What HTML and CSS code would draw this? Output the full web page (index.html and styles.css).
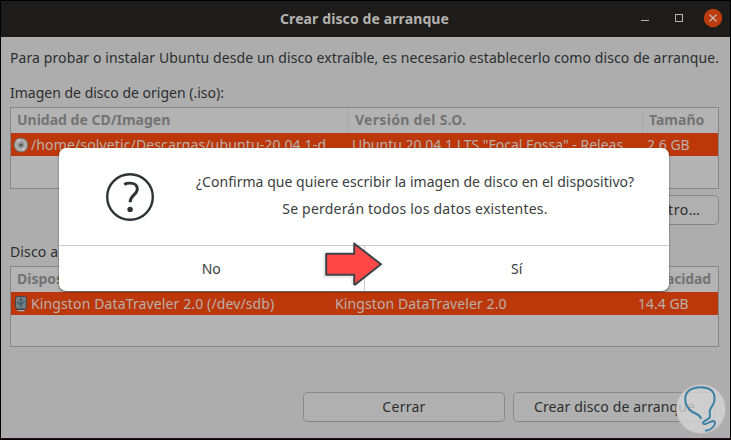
FILE: index.html
```html
<!DOCTYPE html>
<html lang="es">
<head>
<meta charset="utf-8">
<title>Crear disco de arranque</title>
<link rel="stylesheet" href="styles.css">
</head>
<body>
<main class="window">
  <header class="titlebar">
    <h1 class="title">Crear disco de arranque</h1>
    <svg class="controls" width="90" height="36" viewBox="0 0 90 36">
      <path d="M9 19.500h8" stroke="#b4b4b0" fill="none"/>
      <rect x="43.500" y="13.500" width="7" height="7" stroke="#b4b4b0" fill="none"/>
      <circle cx="81" cy="17" r="9.200" fill="#bc3c10"/>
      <path d="M77.500 13.500l7 7M84.500 13.500l-7 7" stroke="#c4b6ae" stroke-width="1.300" fill="none"/>
    </svg>
  </header>
  <section class="content">
    <p class="intro">Para probar o instalar Ubuntu desde un disco extraíble, es necesario establecerlo como disco de arranque.</p>
    <p class="label source-label">Imagen de disco de origen (.iso):</p>
    <div class="table source">
      <div class="row head">
        <span class="cell h-unit">Unidad de CD/Imagen</span>
        <span class="cell h-version">Versión del S.O.</span>
        <span class="cell h-size">Tamaño</span>
      </div>
      <div class="row selected">
        <span class="cell path"><svg class="icon" width="16" height="16" viewBox="0 0 16 16"><circle cx="8" cy="8" r="7" fill="#aaa" stroke="#6f655f"/><path d="M8 8L3 3.500A6.500 6.500 0 0 1 7 1.600zM8 8l5 4.500A6.500 6.500 0 0 1 9 14.400z" fill="#bcbcbc"/><circle cx="8" cy="8" r="2.500" fill="#929292" stroke="#727272" stroke-width=".7"/><circle cx="8" cy="8" r="1.100" fill="#333"/></svg>/home/solvetic/Descargas/ubuntu-20.04.1-d</span>
        <span class="cell version">Ubuntu 20.04.1 LTS "Focal Fossa" - Releas</span>
        <span class="cell size">2.6 GB</span>
      </div>
    </div>
    <div class="other-row"><button class="button other">Otro…</button></div>
    <p class="label target-label">Disco a usar:</p>
    <div class="table target">
      <div class="row head">
        <span class="cell h-device">Dispositivo</span>
        <span class="cell h-label">Etiqueta</span>
        <span class="cell h-capacity">Capacidad</span>
      </div>
      <div class="row selected">
        <span class="cell device"><svg class="icon" width="16" height="16" viewBox="0 0 16 16"><rect x="2.500" y=".500" width="11" height="12.500" rx="2" fill="#777e82" stroke="#414446"/><path d="M8 11V3M8 9L5 7V5M8 8l3-1.500V4.500M6.700 4L8 2.500 9.300 4" fill="none" stroke="#34556a" stroke-width="1.100"/><path d="M4.500 14.500h7" stroke="#9eb0b5" stroke-width="1.500"/><path d="M4 13.500h8" stroke="#3c4144"/></svg>Kingston DataTraveler 2.0 (/dev/sdb)</span>
        <span class="cell label-cell">Kingston DataTraveler 2.0</span>
        <span class="cell capacity">14.4 GB</span>
      </div>
    </div>
    <div class="actions">
      <button class="button close">Cerrar</button>
      <button class="button create">Crear disco de arranque</button>
    </div>
  </section>
</main>

<div class="dialog" role="dialog">
  <div class="message">
    <svg class="question" width="48" height="48" viewBox="0 0 48 48">
      <circle cx="24" cy="24" r="22.800" fill="none" stroke="#2e3234" stroke-width="2.400"/>
      <path d="M18.200 11.400C20 10.500 22 10.100 24 10.100C28.500 10.100 31.300 12.500 31.300 16C31.300 22 24.100 22 24.100 29.300" fill="none" stroke="#2e3234" stroke-width="2.900"/>
      <circle cx="24.100" cy="36.400" r="2.700" fill="#2e3234"/>
    </svg>
    <div class="text">
      <p class="ask">¿Confirma que quiere escribir la imagen de disco en el dispositivo?</p>
      <p class="warn">Se perderán todos los datos existentes.</p>
    </div>
  </div>
  <div class="choices">
    <button class="choice">No</button>
    <button class="choice">Sí</button>
  </div>
</div>

<svg class="arrow" width="64" height="48" viewBox="320 240 64 48">
  <path d="M325 254v22h28v8" fill="none" stroke="#e9ebe7" stroke-width="4"/>
  <path d="M326.200 253.800H354.200V243.600L381 264.200L355 284.600H354.200V274.800H326.200Z" fill="#ff4747" stroke="#3f4348" stroke-width="2" stroke-linejoin="round"/>
</svg>
<svg class="logo" width="52" height="52" viewBox="675 382.500 52 52">
  <circle cx="701" cy="408.500" r="24.700" fill="#d6d6d6" fill-opacity=".78" stroke="#b9b0b7" stroke-width=".8"/>
  <path d="M701 418.500C700 412.500 694 414 690 409.500C684.500 404 683 395 689.500 389.500C696 385.500 706 386 711 389.500C715.500 393 715.500 400.500 712.500 405C710.500 408 709 409 709.800 414L710 417" fill="none" stroke="#3a7fa4" stroke-width="2" stroke-linejoin="round"/>
  <path d="M710 417C708 419 702.500 420.500 703 422.800C704 425.500 710 421 713 420.500C716 420.500 715.500 424 713 426.500C711 429 707.500 430 705 430.200" fill="none" stroke="#3a7fa4" stroke-width="1.900"/>
</svg>
</body>
</html>
```
FILE: styles.css
```css
* { box-sizing: border-box; }
body {
  margin: 0;
  width: 731px;
  height: 440px;
  overflow: hidden;
  background: #000;
  color: #2b2e2f;
  font: 14px/20px "Noto Sans", sans-serif;
}
p, h1 { margin: 0; white-space: nowrap; }
svg { display: block; }
button { font: inherit; color: inherit; padding: 0; margin: 0; white-space: nowrap; }

.window {
  margin: 1px 1px 0;
  height: 438px;
  background: #adadad;
  border-bottom: 1px solid #2f0524;
}
.titlebar {
  height: 36px;
  background: #1e1c1a;
  display: grid;
  grid-template-columns: 89px 1fr 91px;
  align-items: center;
}
.title {
  grid-column: 2;
  text-align: center;
  font-size: 14px;
  font-weight: 700;
  letter-spacing: .112px;
  color: #b4b2ae;
}
.controls { position: relative; left: -7px; }

.content { padding: 11px 11px 0 9px; }
.intro { letter-spacing: .097px; }
.source-label { margin-top: 15px; }
.target-label { letter-spacing: .13px; }

.table {
  border: 1px solid #868686;
  background: #b3b3b3;
}
.source { height: 82px; margin-top: 4px; }
.target { height: 81px; margin-top: 4px; }
.row { display: grid; }
.source .row { grid-template-columns: 337px 295px 1fr; }
.target .row { grid-template-columns: 318px 304px 1fr; }
.cell { display: flex; align-items: center; white-space: nowrap; height: 23px; }
.head { height: 25px; font-weight: 700; color: #737373; }
.head .cell { height: 25px; padding: 0 7px 2px 6px; border-right: 1px solid #a8a8a8; }
.head .cell:last-child { border-right: 0; }
.selected { height: 23px; background: #bc380a; color: #b9b0aa; }

.h-unit { letter-spacing: 0; }
.head .h-version { letter-spacing: .296px; padding-left: 7px; }
.path, .device { gap: 2px; padding-left: 2px; }
.path { letter-spacing: .131px; }
.version { padding-left: 4px; }
.size { padding-left: 4px; letter-spacing: 0; }
.head .h-capacity { justify-content: flex-end; letter-spacing: -.15px; }
.device { letter-spacing: .125px; }
.label-cell { padding-left: 6px; letter-spacing: .1px; }
.capacity { padding-left: 5px; }

.other-row { margin-top: 6px; display: flex; justify-content: flex-end; }
.button {
  height: 30px;
  border: 1px solid #888;
  border-bottom-color: #838383;
  border-radius: 5px;
  background: #b0b0b0;
}
.other { width: 85px; padding-left: 4px; letter-spacing: .6px; }
.target-label { margin-top: 17px; }
.actions { margin-top: 45px; padding-right: 4px; display: flex; justify-content: flex-end; gap: 8px; }
.actions .button { width: 202px; }
.close { letter-spacing: .267px; }
.create { padding-left: 1px; letter-spacing: .126px; }

.dialog {
  position: absolute;
  left: 59px;
  top: 148px;
  width: 610px;
  height: 143px;
  border-radius: 7px;
  background: #fff;
  box-shadow: 0 1px 2px rgba(0, 0, 0, .6);
  color: #3a3e40;
}
.message { height: 98px; display: flex; padding-left: 47px; border-bottom: 1px solid #c9c9c9; }
.question { margin-top: 25px; }
.text { margin-left: 42px; padding-top: 24px; width: 438px; text-align: center; }
.ask { letter-spacing: .03px; }
.warn { margin-top: 7px; letter-spacing: .205px; }
.choices { display: flex; height: 45px; }
.choice { flex: 1; border: 0; background: none; padding-top: 1px; }
.choice + .choice { border-left: 1px solid #c9c9c9; }

.arrow { position: absolute; left: 320px; top: 240px; }
.logo { position: absolute; left: 675px; top: 382.5px; }
```
